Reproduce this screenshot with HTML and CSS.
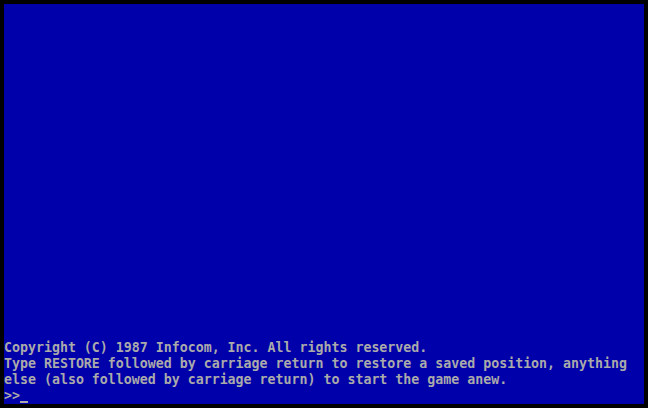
FILE: index.html
```html
<!DOCTYPE html>
<html>
<head>
<meta charset="utf-8">
<link rel="stylesheet" href="styles.css">
</head>
<body>
<div class="screen">
  <div class="line">Copyright (C) 1987 Infocom, Inc. All rights reserved.</div>
  <div class="line">Type RESTORE followed by carriage return to restore a saved position, anything</div>
  <div class="line">else (also followed by carriage return) to start the game anew.</div>
  <div class="line">&gt;&gt;<span class="cursor"></span></div>
</div>
</body>
</html>
```
FILE: styles.css
```css
html, body {
  margin: 0;
  padding: 0;
  background: #000000;
}
body {
  padding: 4px;
}
.screen {
  width: 640px;
  height: 400px;
  background: #0000aa;
  color: #aaaaaa;
  display: flex;
  flex-direction: column;
  justify-content: flex-end;
  font-family: "DejaVu Sans Mono", monospace;
  font-size: 13.289px;
  font-weight: bold;
  line-height: 16px;
}
.line {
  height: 16px;
  white-space: pre;
}
.cursor {
  display: inline-block;
  width: 8px;
  height: 16px;
  vertical-align: top;
  background: linear-gradient(transparent 13px, #aaaaaa 13px, #aaaaaa 15px, transparent 15px);
}
```
